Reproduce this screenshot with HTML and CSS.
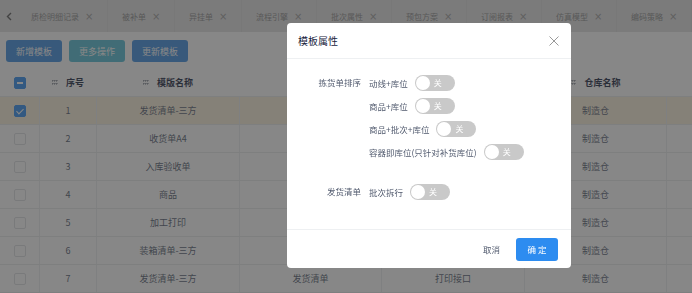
FILE: index.html
```html
<!DOCTYPE html>
<html lang="zh">
<head>
<meta charset="utf-8">
<link rel="stylesheet" href="styles.css">
</head>
<body>
<div class="page">
  <div class="tabbar">
    <div class="tab-prev"><svg width="6" height="9" viewBox="0 0 6 9"><path d="M5 1 L1.5 4.5 L5 8" fill="none" stroke="#555" stroke-width="1.4"/></svg></div>
    <div class="tab"><span>质检明细记录</span><i class="x">×</i></div>
    <div class="tab"><span>被补单</span><i class="x">×</i></div>
    <div class="tab"><span>异挂单</span><i class="x">×</i></div>
    <div class="tab"><span>流程引擎</span><i class="x">×</i></div>
    <div class="tab"><span>批次属性</span><i class="x">×</i></div>
    <div class="tab"><span>预包方案</span><i class="x">×</i></div>
    <div class="tab"><span>订阅报表</span><i class="x">×</i></div>
    <div class="tab"><span>仿真模型</span><i class="x">×</i></div>
    <div class="tab"><span>编码策略</span><i class="x">×</i></div>
  </div>
  <div class="toolbar">
    <button class="btn btn-blue">新增模板</button>
    <button class="btn btn-teal">更多操作</button>
    <button class="btn btn-blue">更新模板</button>
  </div>
  <div class="table">
    <div class="row head">
      <div class="cell c0"><span class="cb cb-ind"></span></div>
      <div class="cell c1"><span class="dots"></span>序号</div>
      <div class="cell c2"><span class="dots"></span>模版名称</div>
      <div class="cell c3"></div>
      <div class="cell c4"></div>
      <div class="cell c5"><span class="dots"></span>仓库名称</div>
      <div class="cell c6"></div>
    </div>
    <div class="row sel">
      <div class="cell c0"><span class="cb cb-on"></span></div>
      <div class="cell c1">1</div><div class="cell c2">发货清单-三方</div>
      <div class="cell c3"></div><div class="cell c4"></div>
      <div class="cell c5">制造仓</div><div class="cell c6"></div>
    </div>
    <div class="row">
      <div class="cell c0"><span class="cb"></span></div>
      <div class="cell c1">2</div><div class="cell c2">收货单A4</div>
      <div class="cell c3"></div><div class="cell c4"></div>
      <div class="cell c5">制造仓</div><div class="cell c6"></div>
    </div>
    <div class="row">
      <div class="cell c0"><span class="cb"></span></div>
      <div class="cell c1">3</div><div class="cell c2">入库验收单</div>
      <div class="cell c3"></div><div class="cell c4"></div>
      <div class="cell c5">制造仓</div><div class="cell c6"></div>
    </div>
    <div class="row">
      <div class="cell c0"><span class="cb"></span></div>
      <div class="cell c1">4</div><div class="cell c2">商品</div>
      <div class="cell c3"></div><div class="cell c4"></div>
      <div class="cell c5">制造仓</div><div class="cell c6"></div>
    </div>
    <div class="row">
      <div class="cell c0"><span class="cb"></span></div>
      <div class="cell c1">5</div><div class="cell c2">加工打印</div>
      <div class="cell c3"></div><div class="cell c4"></div>
      <div class="cell c5">制造仓</div><div class="cell c6"></div>
    </div>
    <div class="row">
      <div class="cell c0"><span class="cb"></span></div>
      <div class="cell c1">6</div><div class="cell c2">装箱清单-三方</div>
      <div class="cell c3"></div><div class="cell c4"></div>
      <div class="cell c5">制造仓</div><div class="cell c6"></div>
    </div>
    <div class="row">
      <div class="cell c0"><span class="cb"></span></div>
      <div class="cell c1">7</div><div class="cell c2">发货清单-三方</div>
      <div class="cell c3">发货清单</div><div class="cell c4">打印接口</div>
      <div class="cell c5">制造仓</div><div class="cell c6"></div>
    </div>
  </div>
</div>

<div class="mask">
  <div class="modal">
    <div class="modal-head">
      <span class="modal-title">模板属性</span>
      <svg class="modal-close" width="10" height="10" viewBox="0 0 10 10"><path d="M0.5 0.5 L9.5 9.5 M9.5 0.5 L0.5 9.5" stroke="#999" stroke-width="1" fill="none"/></svg>
    </div>
    <div class="modal-body">
      <div class="form-group">
        <div class="form-label">拣货单排序</div>
        <div class="form-items">
          <div class="item"><span>动线+库位</span><span class="switch"><span class="knob"></span><span class="sw-text">关</span></span></div>
          <div class="item"><span>商品+库位</span><span class="switch"><span class="knob"></span><span class="sw-text">关</span></span></div>
          <div class="item"><span>商品+批次+库位</span><span class="switch"><span class="knob"></span><span class="sw-text">关</span></span></div>
          <div class="item"><span>容器即库位(只针对补货库位)</span><span class="switch"><span class="knob"></span><span class="sw-text">关</span></span></div>
        </div>
      </div>
      <div class="form-group">
        <div class="form-label">发货清单</div>
        <div class="form-items">
          <div class="item"><span>批次拆行</span><span class="switch"><span class="knob"></span><span class="sw-text">关</span></span></div>
        </div>
      </div>
    </div>
    <div class="modal-foot">
      <button class="btn-text">取消</button>
      <button class="btn-primary">确 定</button>
    </div>
  </div>
</div>
</body>
</html>
```
FILE: styles.css
```css
* { box-sizing: border-box; }
html, body { margin: 0; padding: 0; }
body {
  width: 692px;
  height: 293px;
  overflow: hidden;
  background: #fff;
  font-family: "Noto Sans CJK SC", "Noto Sans", sans-serif;
  color: #515a6e;
}
.page { width: 692px; }

.tabbar {
  height: 32px;
  background: #e2e2e2;
  display: flex;
  align-items: stretch;
  font-size: 8px;
  color: #8a8a8a;
  white-space: nowrap;
  overflow: hidden;
}
.tab-prev {
  width: 17px;
  display: flex;
  align-items: center;
  justify-content: center;
}
.tab {
  display: flex;
  align-items: center;
  padding: 0 14px;
  gap: 6px;
  border-right: 1px solid #dadada;
  flex: none;
}
.tab .x {
  font-style: normal;
  font-size: 10px;
  color: #9a9a9a;
  font-family: "DejaVu Sans", sans-serif;
  width: 8px;
}

.toolbar {
  display: flex;
  gap: 7px;
  padding: 8px 6px 7px;
}
.btn {
  height: 22px;
  padding: 0 10px;
  border: 0;
  border-radius: 3px;
  font-family: inherit;
  font-size: 9px;
  color: #fff;
}
.btn-blue { background: #3b8de0; }
.btn-teal { background: #52bcd4; }

.table { font-size: 9px; }
.row {
  display: flex;
  height: 28px;
  border-bottom: 1px solid #e8eaec;
}
.row.head { font-weight: bold; color: #17233d; }
.row.sel { background: #fbefd9; }
.cell {
  display: flex;
  align-items: center;
  justify-content: center;
  border-right: 1px solid #eceef0;
  flex: none;
}
.head .cell { border-right-color: transparent; }
.c0 { width: 40px; }
.c1 { width: 57px; }
.c2 { width: 143px; }
.c3 { width: 142px; }
.c4 { width: 143px; }
.c5 { width: 142px; }
.c6 { width: 25px; border-right: 0; }

.dots {
  width: 6px;
  height: 5px;
  margin-right: 8px;
  background-image: radial-gradient(circle at 0.75px 0.75px, #8c929c 0.7px, transparent 0.95px);
  background-size: 2px 3px;
}

.cb {
  width: 12px;
  height: 12px;
  border: 1px solid #dcdee2;
  border-radius: 2px;
  background: #fff;
  position: relative;
}
.cb-ind, .cb-on { background: #2d8cf0; border-color: #2d8cf0; }
.cb-ind::after {
  content: "";
  position: absolute;
  left: 2px; right: 2px; top: 4px;
  height: 2px;
  background: #fff;
}
.cb-on::after {
  content: "";
  position: absolute;
  left: 3px; top: 1px;
  width: 3px; height: 6px;
  border: solid #fff;
  border-width: 0 1.5px 1.5px 0;
  transform: rotate(45deg);
}

.mask {
  position: fixed;
  inset: 0;
  background: rgba(55, 55, 55, 0.6);
  padding: 23px 0 0 287px;
}
.modal {
  width: 284px;
  height: 245px;
  background: #fff;
  border-radius: 4px;
  display: flex;
  flex-direction: column;
}
.modal-head {
  height: 36px;
  border-bottom: 1px solid #eef0f2;
  display: flex;
  align-items: center;
  justify-content: space-between;
  padding: 0 12px 0 11px;
}
.modal-title {
  font-size: 10px;
  color: #17233d;
}
.modal-body {
  flex: 1;
  padding: 12px 0 0 0;
  font-size: 8.5px;
  color: #515a6e;
}
.form-group {
  display: flex;
  margin-bottom: 17px;
}
.form-label {
  width: 82px;
  text-align: right;
  padding-right: 8px;
  line-height: 23px;
}
.form-items { display: flex; flex-direction: column; }
.item {
  height: 23px;
  display: flex;
  align-items: center;
  gap: 7px;
}
.switch {
  width: 40px;
  height: 16px;
  border-radius: 8px;
  background: #c9c9c9;
  position: relative;
  display: flex;
  align-items: center;
}
.knob {
  position: absolute;
  left: 1px; top: 1px;
  width: 14px; height: 14px;
  border-radius: 50%;
  background: #fff;
}
.sw-text {
  color: #fff;
  font-size: 8px;
  margin-left: 19px;
}
.modal-foot {
  height: 39px;
  border-top: 1px solid #eef0f2;
  display: flex;
  align-items: center;
  justify-content: flex-end;
  padding: 0 13px 0 0;
  gap: 10px;
}
.btn-text {
  border: 0;
  background: transparent;
  font-family: inherit;
  font-size: 8.5px;
  color: #515a6e;
  padding: 0 6px;
  height: 23px;
}
.btn-primary {
  width: 42px;
  height: 23px;
  border: 0;
  border-radius: 3px;
  background: #2d8cf0;
  color: #fff;
  font-family: inherit;
  font-size: 8.5px;
}
```
